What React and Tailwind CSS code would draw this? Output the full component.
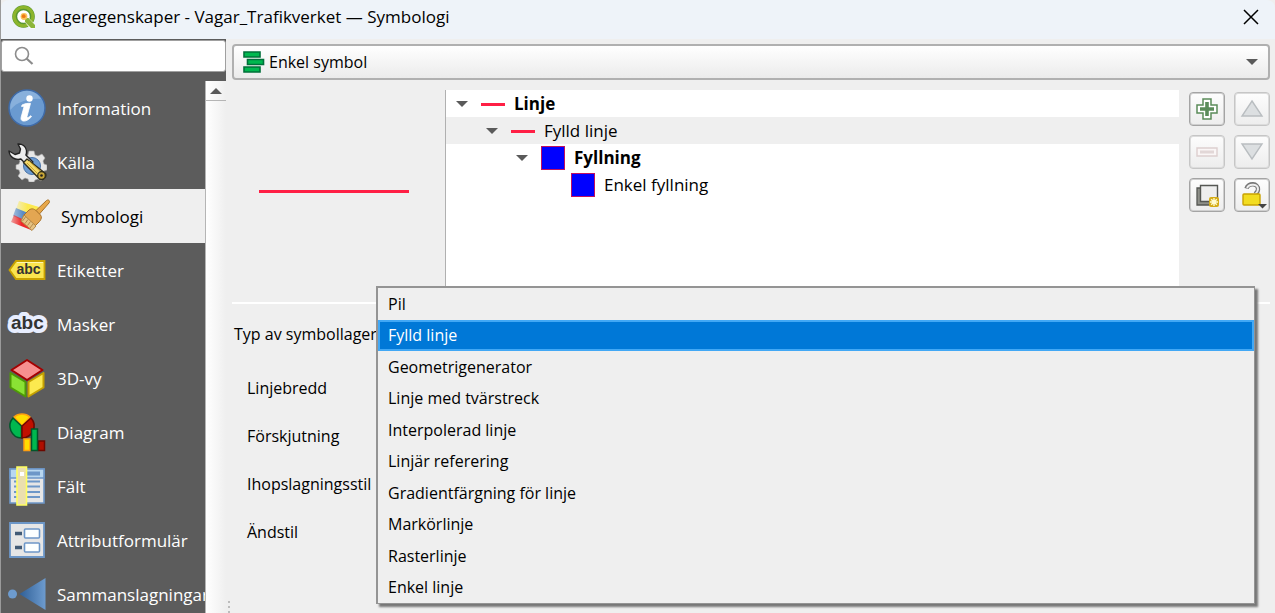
import React, { useState } from 'react';

const layerTypes = [
  'Pil',
  'Fylld linje',
  'Geometrigenerator',
  'Linje med tvärstreck',
  'Interpolerad linje',
  'Linjär referering',
  'Gradientfärgning för linje',
  'Markörlinje',
  'Rasterlinje',
  'Enkel linje',
];

const fields = [
  { id: 'width', label: 'Linjebredd' },
  { id: 'offset', label: 'Förskjutning' },
  { id: 'join', label: 'Ihopslagningsstil' },
  { id: 'cap', label: 'Ändstil' },
];

function QgisLogo() {
  return (
    <svg width="24" height="24" viewBox="0 0 24 24">
      <circle cx="11.500" cy="11.500" r="8.800" fill="#fff" stroke="#589632" strokeWidth="5" />
      <circle cx="11.500" cy="11.500" r="9.300" fill="none" stroke="#8cb52c" strokeWidth="3" />
      <path d="M11 11l4 0 8 8.500v4h-5L11 15z" fill="#fff" />
      <path d="M13 13h3.500l6.500 7V23h-4l-6-6z" fill="#8cb53a" />
      <circle cx="12" cy="11.500" r="3.400" fill="#f9c25a" />
      <circle cx="11.700" cy="11.200" r="1.900" fill="#ee7913" />
    </svg>
  );
}

function InfoIcon() {
  return (
    <svg width="40" height="40" viewBox="0 0 40 40">
      <circle cx="20" cy="20" r="18" fill="#6a9ad0" stroke="#3f6ba8" strokeWidth="1.500" />
      <path d="M3.500 22A16.500 16.500 0 0 1 34 11C24 10 10 13 3.500 22z" fill="#9dbfe4" opacity=".6" />
      <circle cx="22.500" cy="10.500" r="3.200" fill="#fff" />
      <path d="M15 17c3-1.500 6-1.800 8.500-1.600L20 28.500c-.3 1.500.8 1.600 3.800-.8l.7 1c-3.300 3.500-6 4.700-8.400 4.300-2-.4-2.400-2-1.900-4l2.600-9.400c.2-1-.6-1.300-2.200-1z" fill="#fff" stroke="#fff" strokeWidth=".8" />
    </svg>
  );
}

function SourceIcon() {
  return (
    <svg width="40" height="40" viewBox="0 0 40 40">
      <path d="M22 9h5l1 4 3 1 4-2 3 4-2 3 1 3 3 1v5l-3 1-1 3 2 3-4 4-3-2-3 1-1 2h-5l-1-3-3-1-3 2-4-4 2-3-1-3-3-1v-4l3-1 1-3-2-3 4-4 3 2 3-1z" fill="#e6e6e6" stroke="#aaa" strokeWidth=".6" />
      <circle cx="25" cy="24" r="8.500" fill="#6d9bd1" stroke="#4873a8" />
      <path d="M11 2c4-.5 8 2.500 8.500 6.500.2 2-.2 3.500-.6 4.500l7 7-4.500 4.500-7.500-7.500C8 18.500 2.500 15 2 9l6 3.500 4.500-1.500 1-4z" fill="#eee" stroke="#222" strokeWidth="1.400" strokeLinejoin="round" />
      <path d="M20 17l18.500 14.500c1.500 3-2 7-5.500 6L16.500 20.500z" fill="#f4d96b" stroke="#33301f" strokeWidth="1.400" strokeLinejoin="round" />
      <path d="M22 19l12 11M20 21l12 12" stroke="#c9a52d" strokeWidth="1" />
      <circle cx="34.500" cy="33.500" r="3.800" fill="#c8a536" stroke="#2b2b1b" strokeWidth="1.200" />
      <circle cx="34.500" cy="33.500" r="1.300" fill="#222" />
    </svg>
  );
}

function BrushIcon() {
  return (
    <svg width="40" height="40" viewBox="0 0 40 40">
      <defs>
        <linearGradient id="fadeY"><stop offset="0" stopColor="#fce94f" stopOpacity=".3" /><stop offset=".5" stopColor="#fce94f" /></linearGradient>
        <linearGradient id="fadeB"><stop offset="0" stopColor="#6a9ad0" stopOpacity=".6" /><stop offset=".5" stopColor="#5b8bc4" /></linearGradient>
        <linearGradient id="fadeR"><stop offset="0" stopColor="#ef2929" stopOpacity=".4" /><stop offset=".5" stopColor="#ef2929" /></linearGradient>
      </defs>
      <path d="M8 5l20 6-5 10L5 13z" fill="url(#fadeY)" />
      <path d="M5 12l17 7-4 8L2 20z" fill="url(#fadeB)" />
      <path d="M3 19l18 9-1 6L0 26z" fill="url(#fadeR)" />
      <path d="M25 14.500L35.500 4.500c2-1.500 4 .5 2.500 2.500L28 18.500z" fill="#e8a84a" stroke="#a8722a" strokeWidth="1" />
      <path d="M18 14c3-2 5-1 7 .5l4.500 4.500c1.500 2 1 4-1 6.500L23 31l-11-11z" fill="#e3a652" stroke="#a8722a" strokeWidth="1" />
      <path d="M13 19l12 11-4 4.500L10 25z" fill="#e6c384" stroke="#b18543" strokeWidth="1" />
      <path d="M14.500 21l-3 4M17 23.500l-3 4M19.500 25.500l-3 4M22 28l-3 4" stroke="#a87b3c" strokeWidth=".8" />
    </svg>
  );
}

function LabelsIcon() {
  return (
    <svg width="40" height="40" viewBox="0 0 40 40">
      <path d="M9 11h28.500v18H9L2.500 20z" fill="#fbe54e" stroke="#c9a200" strokeWidth="1.800" />
      <path d="M10 12.500h26" stroke="#fff7b0" />
      <text x="9.500" y="24" fontFamily="Liberation Sans, sans-serif" fontWeight="bold" fontSize="14" fill="#333">abc</text>
    </svg>
  );
}

function MasksIcon() {
  return (
    <svg width="40" height="40" viewBox="0 0 40 40" overflow="visible">
      <text x="4" y="25" fontFamily="Liberation Sans, sans-serif" fontWeight="bold" fontSize="19" fill="#e8eeff" stroke="#e8eeff" strokeWidth="8" strokeLinejoin="round">abc</text>
      <text x="4" y="25" fontFamily="Liberation Sans, sans-serif" fontWeight="bold" fontSize="19" fill="#333">abc</text>
    </svg>
  );
}

function CubeIcon() {
  return (
    <svg width="40" height="40" viewBox="0 0 40 40" strokeWidth="2" strokeLinejoin="round">
      <path d="M20 2l15.500 10L20 22 4.500 12z" fill="#f78f8f" stroke="#a40000" />
      <path d="M3.500 15L18.500 24v14.500l-15-9z" fill="#8ae234" stroke="#4e9a06" />
      <path d="M36.500 15L21.500 24v14.500l15-9z" fill="#fce94f" stroke="#c4a000" />
    </svg>
  );
}

function DiagramIcon() {
  return (
    <svg width="40" height="40" viewBox="0 0 40 40" strokeWidth="1.500">
      <path d="M15 14L7 5a12 12 0 0 1 16 0z" fill="#ffdd00" stroke="#ff9f0f" />
      <path d="M14.500 14v12A12 12 0 0 1 6 6z" fill="#00b84f" stroke="#00562b" />
      <path d="M15 14v12A12 12 0 0 0 24 6z" fill="#c01000" stroke="#6d0800" />
      <path d="M17 27h6v11.500h-6z" fill="#ffdd00" stroke="#ff9f0f" />
      <path d="M31.500 29h6v9.500h-6z" fill="#b00f00" stroke="#6d0800" />
      <path d="M24.500 17h6v21.500h-6z" fill="#00b84f" stroke="#00562b" />
    </svg>
  );
}

function FieldsIcon() {
  return (
    <svg width="40" height="40" viewBox="0 0 40 40">
      <path d="M3 3h34v34H3z" fill="#e6e6e6" stroke="#6d97c8" strokeWidth="1.600" />
      <path d="M3 3h34v9H3z" fill="#b8d7f0" stroke="#6d97c8" strokeWidth="1.600" />
      <path d="M20 7.500h13" stroke="#6d97c8" strokeWidth="4" />
      <path d="M7 15.500h26M7 20.500h26M7 26h26M7 31h26" stroke="#6d97c8" strokeWidth="1.800" />
      <path d="M10 1h9.500v38H10z" fill="#ebdfae" stroke="#ffff5f" strokeWidth="1.600" />
      <path d="M13 6h4v4h-4z" fill="#fff" />
    </svg>
  );
}

function FormIcon() {
  return (
    <svg width="40" height="40" viewBox="0 0 40 40">
      <path d="M3 3h34v34H3z" fill="#e6e6e6" stroke="#6d97c8" strokeWidth="1.800" />
      <path d="M8 13.500h7M8 27.500h7" stroke="#415a75" strokeWidth="3.600" />
      <rect x="17.500" y="9" width="15" height="9" rx="1" fill="#fcffff" stroke="#6d97c8" strokeWidth="1.600" />
      <rect x="17.500" y="23" width="15" height="9" rx="1" fill="#fcffff" stroke="#6d97c8" strokeWidth="1.600" />
    </svg>
  );
}

function JoinsIcon() {
  return (
    <svg width="40" height="40" viewBox="0 0 40 40">
      <defs>
        <linearGradient id="join"><stop offset="0" stopColor="#2f5f97" /><stop offset="1" stopColor="#6d9bce" /></linearGradient>
      </defs>
      <circle cx="5.500" cy="20" r="4.500" fill="#6d9bce" />
      <path d="M12.500 20L38.500 4v32z" fill="url(#join)" />
    </svg>
  );
}

const pages = [
  { name: 'Information', icon: InfoIcon },
  { name: 'Källa', icon: SourceIcon },
  { name: 'Symbologi', icon: BrushIcon },
  { name: 'Etiketter', icon: LabelsIcon },
  { name: 'Masker', icon: MasksIcon },
  { name: '3D-vy', icon: CubeIcon },
  { name: 'Diagram', icon: DiagramIcon },
  { name: 'Fält', icon: FieldsIcon },
  { name: 'Attributformulär', icon: FormIcon },
  { name: 'Sammanslagningar', icon: JoinsIcon },
];

function Arrow({ up }) {
  return (
    <svg width="12" height="6" viewBox="0 0 12 6" className="shrink-0">
      <path d={up ? 'M0 6L6 0l6 6z' : 'M0 0h12L6 6z'} fill="#5a5a5a" />
    </svg>
  );
}

function LineSwatch() {
  return <span className="h-[3px] w-6 shrink-0 bg-[#ff1f45]" />;
}

function FillSwatch() {
  return <span className="h-6 w-6 shrink-0 border border-[#c01060] bg-[#0000ff]" />;
}

function ToolButton({ label, disabled, children }) {
  return (
    <button
      aria-label={label}
      disabled={disabled}
      className={`flex h-[34px] w-9 items-center justify-center rounded-[4px] border bg-linear-to-b from-[#fdfdfd] to-[#ededed] ring-1 ring-inset ${
        disabled ? 'border-[#c6c6c6] ring-[#dcdcdc]' : 'border-[#a4a4a4] ring-[#cfcfcf]'
      }`}
    >
      {children}
    </button>
  );
}

function Sidebar({ page, onSelect }) {
  return (
    <aside className="flex w-[225px] shrink-0 flex-col bg-[#5c5c5c] pt-px">
      <label className="mb-[9px] flex h-8 shrink-0 items-center rounded-[3px] border border-[#a0a0a0] bg-white pl-3">
        <svg width="20" height="20" viewBox="0 0 20 20" fill="none" stroke="#8c8c8c" strokeWidth="1.600">
          <circle cx="8" cy="8" r="6.500" />
          <path d="M12.500 12.500l6 5.500" strokeWidth="2.200" />
        </svg>
        <input aria-label="Sök" className="ml-2 min-w-0 flex-1 outline-none" />
      </label>
      <div className="flex min-h-0 flex-1">
        <nav className="min-w-0 flex-1 overflow-hidden">
          {pages.map(({ name, icon: Icon }) => (
            <button
              key={name}
              onClick={() => onSelect(name)}
              className={`flex h-[54px] w-full items-center gap-[10px] text-left text-[17px] whitespace-nowrap ${
                page === name ? 'bg-[#efefef] pl-[10px] text-black' : 'pl-[6px] text-white'
              }`}
            >
              <span className="shrink-0"><Icon /></span>
              <span className="pt-[2px]">{name}</span>
            </button>
          ))}
        </nav>
        <div className="w-[21px] shrink-0 border-l border-[#b5b5b5] bg-linear-to-r from-white to-[#efefef]">
          <button aria-label="Rulla upp" className="flex h-5 w-full items-center justify-center border-b border-[#b5b5b5]">
            <Arrow up />
          </button>
        </div>
      </div>
    </aside>
  );
}

function SymbolTree() {
  return (
    <div role="tree" className="min-w-0 flex-1 border-l border-[#b0b0b0] bg-white text-[17px]">
      <div role="treeitem" className="flex h-[27px] items-center pl-[10px]">
        <Arrow />
        <span className="ml-[13px] flex items-center gap-[9px] pt-px font-bold"><LineSwatch />Linje</span>
      </div>
      <div role="treeitem" className="flex h-[27px] items-center bg-[#efefef] pl-[40px]">
        <Arrow />
        <span className="ml-[13px] flex items-center gap-[9px] pt-px"><LineSwatch />Fylld linje</span>
      </div>
      <div role="treeitem" className="flex h-[27px] items-center pl-[70px]">
        <Arrow />
        <span className="ml-[13px] flex items-center gap-[9px] pt-px font-bold"><FillSwatch />Fyllning</span>
      </div>
      <div role="treeitem" className="flex h-[27px] items-center gap-[9px] pt-px pl-[125px]">
        <FillSwatch />Enkel fyllning
      </div>
    </div>
  );
}

function TreeButtons() {
  return (
    <div className="grid grid-cols-2 content-start gap-x-[9px] gap-y-[9px] pt-[2px]">
      <ToolButton label="Lägg till symbollager">
        <svg width="24" height="24" viewBox="0 0 24 24">
          <path d="M8 2h8v6h6v8h-6v6H8v-6H2V8h6z" fill="#fff" stroke="#5b8c5a" strokeWidth="1.500" />
          <path d="M12 5v14M5 12h14" stroke="#5b8c5a" strokeWidth="3.600" />
        </svg>
      </ToolButton>
      <ToolButton label="Flytta upp" disabled>
        <svg width="24" height="20" viewBox="0 0 24 20">
          <path d="M12 2l10 15H2z" fill="#dcdfe1" stroke="#b9bdc0" strokeWidth="1.400" />
        </svg>
      </ToolButton>
      <ToolButton label="Ta bort symbollager" disabled>
        <svg width="24" height="12" viewBox="0 0 24 12">
          <path d="M2 2h20v8H2z" fill="#faf6f6" stroke="#ddcfcf" strokeWidth="1.400" />
          <path d="M5 6h14" stroke="#e2d7d7" strokeWidth="3" />
        </svg>
      </ToolButton>
      <ToolButton label="Flytta ner" disabled>
        <svg width="24" height="20" viewBox="0 0 24 20">
          <path d="M2 2h20L12 17z" fill="#dcdfe1" stroke="#b9bdc0" strokeWidth="1.400" />
        </svg>
      </ToolButton>
      <ToolButton label="Duplicera symbollager">
        <svg width="24" height="24" viewBox="0 0 24 24">
          <path d="M2 5h16v17H2z" fill="#8f9089" stroke="#555753" strokeWidth="1.300" />
          <path d="M5.500 2.500h17v16h-17z" fill="#eee" stroke="#555753" strokeWidth="1.400" />
          <rect x="14" y="14" width="10" height="10" rx="2" fill="#d5ac16" />
          <path d="M19 15v8M15 19h8M16.200 16.200l5.600 5.600M21.800 16.200l-5.600 5.600" stroke="#fffbd0" strokeWidth="1.400" />
        </svg>
      </ToolButton>
      <ToolButton label="Lås färg">
        <svg width="28" height="26" viewBox="0 0 28 26" overflow="visible">
          <path d="M8.500 6.500C10 .5 20.500 1 20 7.500c-.2 2-1.500 3.500-3 4.500" fill="none" stroke="#777" strokeWidth="4.400" />
          <path d="M9 6C11 1.200 20.300 1.600 20 7.500c-.2 2-1.500 3.500-3 4.500" fill="none" stroke="#eee" strokeWidth="2" />
          <rect x="5" y="12" width="17" height="11" rx="1" fill="#f2dc20" stroke="#c9a200" strokeWidth="1.400" />
          <path d="M20 22h9l-4.500 4.500z" fill="#444" />
        </svg>
      </ToolButton>
    </div>
  );
}

function LayerTypeMenu({ value, onChange }) {
  return (
    <ul
      role="listbox"
      aria-label="Typ av symbollager"
      className="absolute -top-8 right-[15px] left-0 flex h-[318px] flex-col border-2 border-r border-b border-[#949494] bg-[#efefef] shadow-[3px_3px_2px_#777]"
    >
      {layerTypes.map(type => (
        <li
          key={type}
          role="option"
          aria-selected={type === value}
          onClick={() => onChange(type)}
          className={`flex flex-1 items-center border-2 pl-2 ${
            type === value ? 'border-[#42a8f5] bg-[#0078d7] text-white' : 'border-transparent'
          }`}
        >
          {type}
        </li>
      ))}
    </ul>
  );
}

export default function App() {
  const [page, setPage] = useState('Symbologi');
  const [layerType, setLayerType] = useState('Fylld linje');

  return (
    <div className="flex h-screen flex-col overflow-hidden border-l border-[#9a9a9a] bg-[#efefef] font-['Open_Sans','Noto_Sans',sans-serif] text-base text-black">
      <header className="flex h-[39px] shrink-0 items-center rounded-t-lg bg-[#eef3f9] pr-4 pb-[5px] pl-[11px]">
        <QgisLogo />
        <h1 className="ml-2 flex-1 text-[17px]">Lageregenskaper - Vagar_Trafikverket — Symbologi</h1>
        <button aria-label="Stäng">
          <svg width="16" height="16" viewBox="0 0 16 16" stroke="#000" strokeWidth="1.500">
            <path d="M1 1l14 14M15 1L1 15" />
          </svg>
        </button>
      </header>

      <div className="flex min-h-0 flex-1">
        <Sidebar page={page} onSelect={setPage} />

        {/* Splitter handle */}
        <div className="flex w-[6px] shrink-0 flex-col items-center justify-end gap-[3px]">
          <span className="h-[2px] w-[2px] bg-[#bcbcbc]" />
          <span className="h-[2px] w-[2px] bg-[#bcbcbc]" />
          <span className="h-[2px] w-[2px] bg-[#bcbcbc]" />
        </div>

        <main className="min-w-0 flex-1 pt-[5px] pr-[5px]">
          <div className="relative flex h-9 items-center rounded border-2 border-[#b0b0b0] bg-linear-to-b from-white to-[#ebebeb] pl-[9px]">
            <svg width="22" height="24" viewBox="0 0 22 24" fill="#00b84f" stroke="#00703a" strokeWidth="1.600">
              <path d="M1 2h16v5H1zM4.500 9.500h16v5h-16zM1 17h16v5H1z" />
            </svg>
            <select aria-label="Symboltyp" className="h-full min-w-0 flex-1 appearance-none bg-transparent pl-1 outline-none">
              <option>Enkel symbol</option>
            </select>
            <span className="pointer-events-none absolute right-[10px]"><Arrow /></span>
          </div>

          {/* Preview, symbol tree and its buttons */}
          <section className="mt-[10px] flex h-[214px] gap-[10px] border-b-2 border-white">
            <div className="flex min-w-0 flex-1">
              <div className="flex w-[213px] shrink-0 pt-[100px] pl-[27px]">
                <span className="h-[3px] w-[150px] bg-[#ff1f45]" />
              </div>
              <SymbolTree />
            </div>
            <TreeButtons />
          </section>

          <form className="flex flex-col pt-[14px]">
            <div className="flex h-8 items-center">
              <label htmlFor="type" className="w-36 shrink-0 pl-[2px] whitespace-nowrap">Typ av symbollager</label>
              <div className="relative h-full min-w-0 flex-1">
                <input id="type" readOnly className="h-full w-full bg-transparent" />
                <LayerTypeMenu value={layerType} onChange={setLayerType} />
              </div>
            </div>
            <div className="flex flex-col gap-4 pt-[22px] pl-[15px]">
              {fields.map(f => (
                <div key={f.id} className="flex h-8 items-center">
                  <label htmlFor={f.id} className="w-36 shrink-0">{f.label}</label>
                  <input id={f.id} className="h-8 w-96 bg-transparent" />
                </div>
              ))}
            </div>
          </form>
        </main>
      </div>
    </div>
  );
}
